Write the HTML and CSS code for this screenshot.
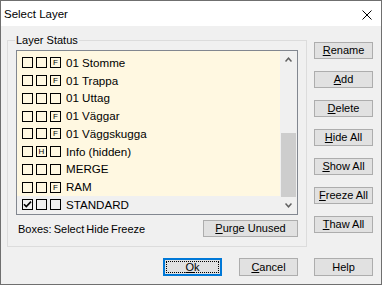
FILE: index.html
```html
<!DOCTYPE html>
<html>
<head>
<meta charset="utf-8">
<link rel="stylesheet" href="styles.css">
</head>
<body>
<div class="window">
  <div class="titlebar">
    <span class="title">Select Layer</span>
    <svg class="close" width="10" height="10" viewBox="0 0 10 10"><path d="M0.5 0.5L9.5 9.5M9.5 0.5L0.5 9.5" stroke="#000" stroke-width="1" fill="none"/></svg>
  </div>
  <div class="content">
    <div class="main">
      <div class="group">
        <div class="legend">Layer Status</div>
        <div class="list">
          <div class="rows">
            <div class="row"><span class="box"></span><span class="box"></span><span class="box">F</span><span class="name">01 Stomme</span></div>
            <div class="row"><span class="box"></span><span class="box"></span><span class="box">F</span><span class="name">01 Trappa</span></div>
            <div class="row"><span class="box"></span><span class="box"></span><span class="box"></span><span class="name">01 Uttag</span></div>
            <div class="row"><span class="box"></span><span class="box"></span><span class="box">F</span><span class="name">01 Väggar</span></div>
            <div class="row"><span class="box"></span><span class="box"></span><span class="box">F</span><span class="name">01 Väggskugga</span></div>
            <div class="row"><span class="box"></span><span class="box">H</span><span class="box"></span><span class="name">Info (hidden)</span></div>
            <div class="row"><span class="box"></span><span class="box"></span><span class="box"></span><span class="name">MERGE</span></div>
            <div class="row"><span class="box"></span><span class="box"></span><span class="box">F</span><span class="name">RAM</span></div>
            <div class="row sel"><span class="box"><svg width="9" height="9" viewBox="0 0 9 9"><path d="M1 4.2L3.3 6.6L8 1.6" stroke="#000" stroke-width="1.6" fill="none"/></svg></span><span class="box"></span><span class="box"></span><span class="name">STANDARD</span></div>
          </div>
          <div class="scrollbar">
            <div class="sb-btn"><svg width="7" height="5" viewBox="0 0 7 5"><path d="M0.5 4.5L3.5 1.2L6.5 4.5" stroke="#606060" stroke-width="1.5" fill="none"/></svg></div>
            <div class="sb-track"><div class="thumb"></div></div>
            <div class="sb-btn"><svg width="7" height="5" viewBox="0 0 7 5"><path d="M0.5 0.5L3.5 3.8L6.5 0.5" stroke="#606060" stroke-width="1.5" fill="none"/></svg></div>
          </div>
        </div>
        <div class="status-row">
          <span class="hint">Boxes: Select Hide Freeze</span>
          <button class="btn purge"><u>P</u>urge Unused</button>
        </div>
      </div>
      <div class="side">
        <button class="btn"><u>R</u>ename</button>
        <button class="btn"><u>A</u>dd</button>
        <button class="btn"><u>D</u>elete</button>
        <button class="btn"><u>H</u>ide All</button>
        <button class="btn"><u>S</u>how All</button>
        <button class="btn"><u>F</u>reeze All</button>
        <button class="btn"><u>T</u>haw All</button>
      </div>
    </div>
    <div class="footer">
      <button class="btn default"><span class="focus"><u>O</u>k</span></button>
      <button class="btn cancel"><u>C</u>ancel</button>
      <button class="btn">Help</button>
    </div>
  </div>
</div>
</body>
</html>
```
FILE: styles.css
```css
* { box-sizing: border-box; }
body {
  margin: 0;
  width: 382px;
  height: 285px;
  overflow: hidden;
  font-family: "Liberation Sans", Arial, sans-serif;
  font-size: 11px;
  color: #000;
}
.window {
  width: 382px;
  height: 285px;
  border: 1px solid #6f6f6f;
  background: #f0f0f0;
  display: flex;
  flex-direction: column;
}
.titlebar {
  height: 25px;
  background: #fff;
  display: flex;
  align-items: center;
  padding-left: 3px;
}
.title {
  font-size: 11.5px;
  line-height: 14px;
  margin-top: 1px;
}
.close {
  margin-left: auto;
  margin-right: 9px;
  margin-top: 2px;
}
.content {
  padding: 14px 8px 0 6px;
}
.main {
  display: flex;
  gap: 7px;
  align-items: flex-start;
}
.group {
  width: 300px;
  height: 207px;
  border: 1px solid #dcdcdc;
  padding: 0 8px;
}
.legend {
  width: fit-content;
  margin-top: -7px;
  margin-left: -1px;
  padding: 0 1px;
  background: #f0f0f0;
  line-height: 13px;
}
.list {
  margin-top: 3px;
  width: 282px;
  height: 165px;
  border: 1px solid #828790;
  background: #fff8e1;
  display: flex;
}
.rows {
  flex: 1;
  padding-top: 3px;
}
.row {
  height: 17.75px;
  display: flex;
  align-items: center;
  padding-left: 5px;
}
.row.sel {
  background: #f0f0f0;
}
.box {
  width: 11px;
  height: 11px;
  border: 1px solid #000;
  margin-right: 3px;
  font-size: 8px;
  line-height: 9px;
  text-align: center;
  display: flex;
  align-items: center;
  justify-content: center;
}
.box:nth-child(3) {
  margin-right: 5px;
}
.name {
  font-size: 11.6px;
  line-height: 14px;
}
.scrollbar {
  width: 17px;
  background: #f0f0f0;
  display: flex;
  flex-direction: column;
}
.sb-btn {
  height: 17px;
  display: flex;
  align-items: center;
  justify-content: center;
}
.sb-track {
  flex: 1;
  display: flex;
  flex-direction: column;
  justify-content: flex-end;
}
.thumb {
  height: 64px;
  margin: 0 1px;
  background: #cdcdcd;
}
.status-row {
  margin-top: 5px;
  width: 282px;
  display: flex;
  justify-content: space-between;
  align-items: center;
  padding-left: 2px;
}
.hint {
  word-spacing: -1px;
}
.btn {
  width: 59px;
  height: 17px;
  padding: 0;
  margin: 0;
  border: 1px solid #adadad;
  background: #e1e1e1;
  font-family: "Liberation Sans", Arial, sans-serif;
  font-size: 11px;
  line-height: 15px;
  color: #000;
  text-align: center;
}
.btn u {
  text-underline-offset: 1px;
}
.purge {
  width: 95px;
}
.side {
  margin-top: 2px;
  display: flex;
  flex-direction: column;
  gap: 12px;
}
.footer {
  margin-top: 11px;
  display: flex;
  justify-content: flex-end;
  gap: 16px;
}
.footer .btn {
  height: 18px;
}
.cancel {
  margin-left: 1px;
}
.btn.default {
  border: 2px solid #0078d7;
  padding: 1px;
}
.focus {
  display: block;
  height: 100%;
  border: 1px dotted #000;
  line-height: 10px;
}
```
